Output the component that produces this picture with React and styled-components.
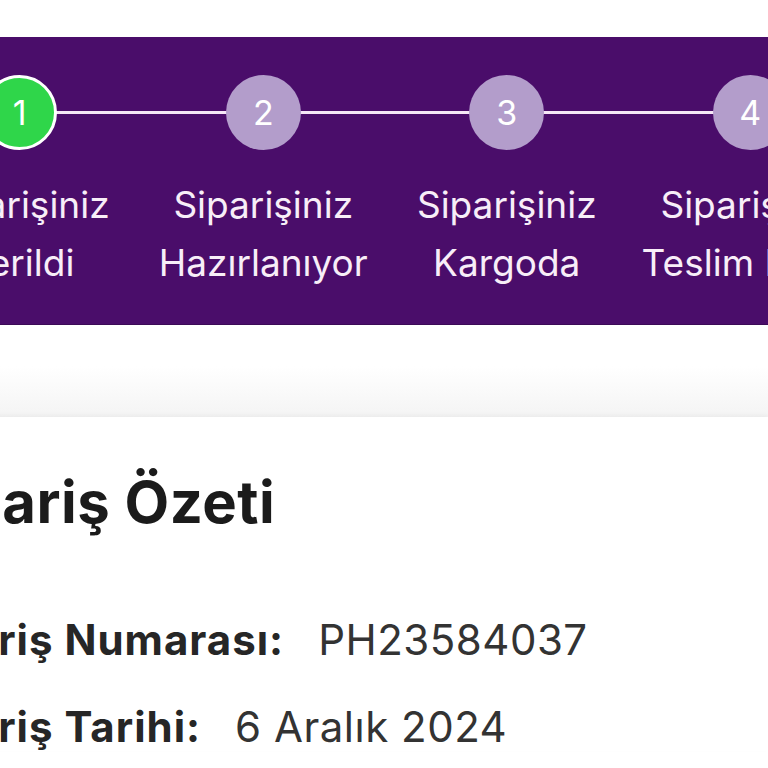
import styled, { createGlobalStyle } from "styled-components";

const GlobalStyle = createGlobalStyle`
  html, body {
    margin: 0;
    padding: 0;
    background: #ffffff;
  }
  body {
    font-family: Inter, "Noto Sans", sans-serif;
    overflow: hidden;
  }
`;

const Page = styled.div`
  width: 768px;
  height: 768px;
  overflow: hidden;
  background: #ffffff;
  padding-top: 37px;
  box-sizing: border-box;
`;

const Banner = styled.section`
  background: #4a0d6a;
  height: 288px;
  box-sizing: border-box;
  padding-top: 38px;
  border-bottom: 1px solid #3c0a57;
`;

const Steps = styled.ol`
  list-style: none;
  margin: 0 0 0 -102px;
  padding: 0;
  display: flex;
  width: 974px;
`;

const Step = styled.li`
  position: relative;
  flex: 0 0 243.5px;
  display: flex;
  flex-direction: column;
  align-items: center;

  &:not(:last-child)::after {
    content: "";
    position: absolute;
    top: 36px;
    left: 50%;
    width: 100%;
    height: 3px;
    background: #f6e7f6;
    z-index: 0;
  }
`;

const Circle = styled.div`
  position: relative;
  z-index: 1;
  width: 75px;
  height: 75px;
  border-radius: 50%;
  box-sizing: border-box;
  display: flex;
  align-items: center;
  justify-content: center;
  font-size: 34px;
  color: #ffffff;
  background: ${(p) => (p.$active ? "#2fd64a" : "#b39dcb")};
  border: ${(p) => (p.$active ? "3px solid #ffffff" : "none")};
`;

const Label = styled.div`
  margin-top: 26px;
  text-align: center;
  color: #f8eef8;
  font-size: 37px;
  line-height: 58px;
  white-space: nowrap;
`;

const Fade = styled.div`
  height: 92px;
  background: linear-gradient(to bottom, #ffffff 0%, #ffffff 45%, #f4f4f4 100%);
`;

const Card = styled.section`
  background: #ffffff;
  box-shadow: 0 -2px 4px rgba(0, 0, 0, 0.04);
  padding: 52px 0 0 0;
  margin-left: -96px;
`;

const Title = styled.h2`
  margin: 0 0 81px 6px;
  font-size: 58px;
  font-weight: 700;
  letter-spacing: 0.5px;
  line-height: 66px;
  color: #1b1b1b;
  white-space: nowrap;
`;

const Row = styled.div`
  display: flex;
  align-items: baseline;
  gap: 34px;
  font-size: 42px;
  line-height: 48px;
  margin-bottom: 39px;
  white-space: nowrap;
`;

const Key = styled.span`
  font-weight: 700;
  letter-spacing: 1px;
  color: #262626;
`;

const Value = styled.span`
  font-weight: 400;
  letter-spacing: 0.5px;
  color: #333333;
`;

const steps = [
  ["Siparişiniz", "Verildi"],
  ["Siparişiniz", "Hazırlanıyor"],
  ["Siparişiniz", "Kargoda"],
  ["Siparişiniz", "Teslim Edildi"],
];

export default function App() {
  return (
    <>
      <GlobalStyle />
      <Page>
        <Banner>
          <Steps>
            {steps.map((lines, i) => (
              <Step key={i}>
                <Circle $active={i === 0}>{i + 1}</Circle>
                <Label>
                  {lines[0]}
                  <br />
                  {lines[1]}
                </Label>
              </Step>
            ))}
          </Steps>
        </Banner>
        <Fade />
        <Card>
          <Title>Sipariş Özeti</Title>
          <Row>
            <Key>Sipariş Numarası:</Key>
            <Value>PH23584037</Value>
          </Row>
          <Row>
            <Key>Sipariş Tarihi:</Key>
            <Value>6 Aralık 2024</Value>
          </Row>
        </Card>
      </Page>
    </>
  );
}
